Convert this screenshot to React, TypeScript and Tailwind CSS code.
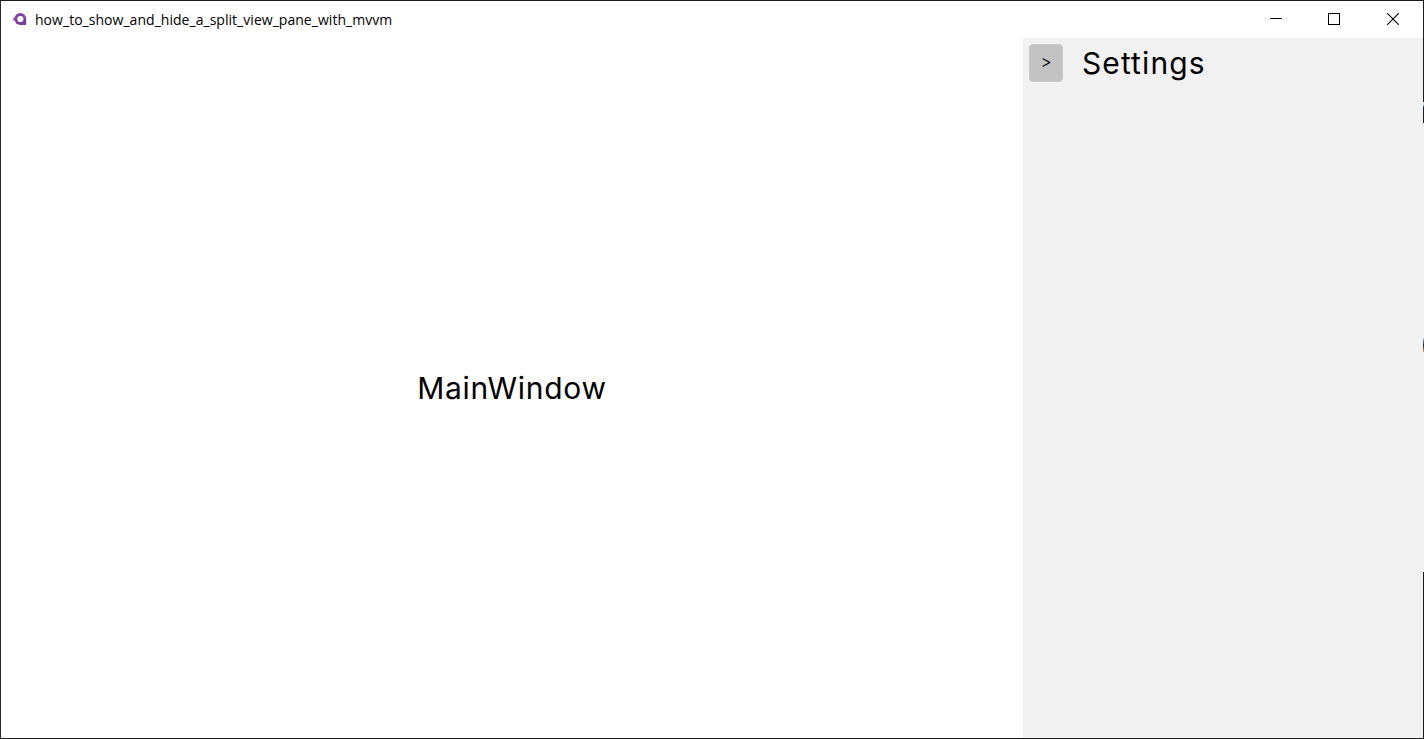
import React from "react";

function AppIcon() {
  return (
    <svg className="ml-3 h-4 w-4 shrink-0" viewBox="0 0 16 16" aria-hidden="true">
      <circle cx="7.3" cy="7" r="5.9" fill="#8043a3" />
      <path d="M7.3 7H13.2V12.1Q13.2 13 12.3 13H7.3Z" fill="#783d9c" />
      <circle cx="1.7" cy="7" r="1.5" fill="#8043a3" />
      <circle cx="7.4" cy="7" r="3.1" fill="#fff" />
    </svg>
  );
}

function WindowControls() {
  return (
    <div className="ml-auto flex h-full text-black">
      <button className="flex h-full w-[58px] items-start justify-center pt-3" aria-label="Minimize">
        <svg className="h-3 w-3" viewBox="0 0 12 12">
          <path d="M0 5.5H12" stroke="currentColor" />
        </svg>
      </button>
      <button className="flex h-full w-[58px] items-start justify-center pt-3" aria-label="Maximize">
        <svg className="h-3 w-3" viewBox="0 0 12 12">
          <rect x="0.5" y="0.5" width="11" height="11" fill="none" stroke="currentColor" />
        </svg>
      </button>
      <button className="flex h-full w-[60px] items-start justify-center pt-3" aria-label="Close">
        <svg className="h-3 w-3" viewBox="0 0 12 12">
          <path d="M0.2 0.2L11.8 11.8M11.8 0.2L0.2 11.8" stroke="currentColor" strokeWidth="1.1" />
        </svg>
      </button>
    </div>
  );
}

function TitleBar() {
  return (
    <header className="flex h-[37px] shrink-0 items-center bg-white">
      <AppIcon />
      <h1 className="ml-1.5 whitespace-nowrap font-['Open_Sans',sans-serif] text-[14px] leading-5 tracking-[0.035px] text-black">
        how_to_show_and_hide_a_split_view_pane_with_mvvm
      </h1>
      <WindowControls />
    </header>
  );
}

function SettingsPane() {
  return (
    <aside className="flex w-[400px] shrink-0 items-start bg-[#f1f1f1] pl-1.5 pt-1.5">
      <button className="flex h-[38px] w-[34px] shrink-0 items-center justify-center rounded-[4px] border border-[#cacaca] bg-[#c2c2c2] text-[17px] font-light">
        &gt;
      </button>
      <h2 className="ml-[19px] text-[30px] font-normal leading-[38px] tracking-[1.1px]">Settings</h2>
    </aside>
  );
}

export default function App() {
  return (
    <div className="flex h-[739px] w-[1424px] overflow-hidden font-[Inter,sans-serif] text-black">
      <div className="flex min-w-0 flex-1 flex-col border-y border-l border-t-[#1e1b1f] border-b-[#1e1e1e] border-l-[#2b2b2e] bg-white">
        <TitleBar />
        <div className="flex min-h-0 flex-1">
          <main className="flex min-w-0 flex-1 items-center justify-center">
            <p className="text-[30px] font-normal leading-[38px] tracking-[0.72px]">MainWindow</p>
          </main>
          <SettingsPane />
        </div>
      </div>
      <div className="flex w-px shrink-0 flex-col">
        <div className="h-[102px] bg-[#1e1e20]" />
        <div className="h-[3px] bg-[#e8dcb8]" />
        <div className="h-[2px] bg-[#4a8cc8]" />
        <div className="h-4 bg-[#1e1e20]" />
        <div className="h-[215px] bg-[#f1f1f1]" />
        <div className="h-[14px] bg-linear-to-b from-[#a9d4ee] via-[#241a2c] to-[#e9a85c]" />
        <div className="flex-1 bg-[#f1f1f1]" />
        <div className="h-[167px] bg-[#1a1a1c]" />
      </div>
    </div>
  );
}
